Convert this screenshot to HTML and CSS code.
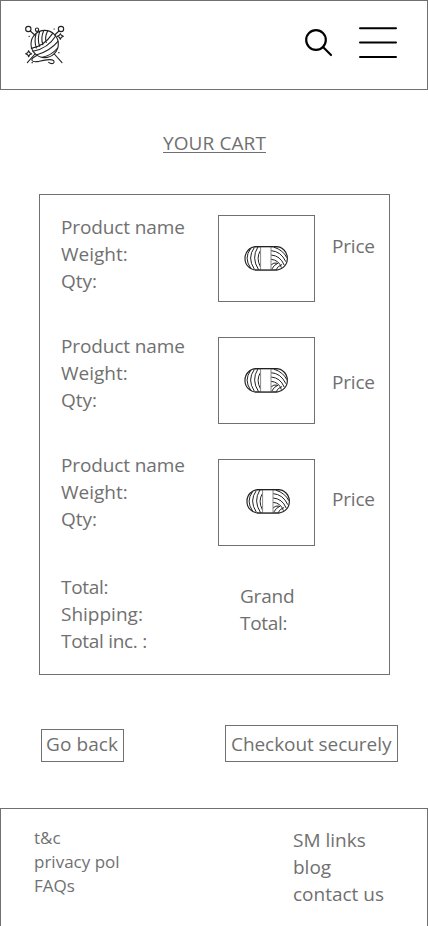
FILE: index.html
```html
<!DOCTYPE html>
<html lang="en">
<head>
<meta charset="utf-8">
<meta name="viewport" content="width=device-width, initial-scale=1">
<title>Your cart</title>
<link rel="stylesheet" href="styles.css">
</head>
<body>
<svg class="defs" aria-hidden="true">
  <symbol id="skein" viewBox="0 0 180 108">
    <path class="strand" d="M57 30Q36 59 57 92M68 28Q48 60 70 94M76 38Q62 60 76 86M46 33Q26 60 46 89"/>
    <path class="strand" d="M109 38Q138 40 152 70M109 51Q136 53 147 80M109 64Q132 66 139 88M118 28Q144 36 155 58M109 80Q116 73 125 75M111 92Q117 80 128 76M124 94Q128 84 140 80"/>
    <rect x="30" y="26" width="127" height="70" rx="34"/>
    <path class="band" d="M78 26H108V96H78Z"/>
    <path d="M61 26H126M61 96H126"/>
  </symbol>
</svg>
<header class="header">
  <svg class="logo" viewBox="0 0 180 180">
    <circle cx="92" cy="84" r="41"/>
    <circle cx="43" cy="39" r="8"/><circle cx="141" cy="39" r="8"/><circle cx="69" cy="41" r="5"/>
    <path d="M49 45L62 57M135 45L122 57M63 114L40 140M121 114L144 140"/>
    <path d="M66 54Q60 75 67 96M77 47Q69 70 77 91M89 44Q79 67 87 86M101 45Q91 64 97 79M52 97Q90 91 116 52M57 106Q102 97 125 60M67 117Q108 105 132 76M86 124Q112 118 131 96"/>
    <path d="M67 119C46 130 50 140 75 136C94 131 113 129 119 134C124 144 111 145 104 139"/>
    <path d="M139 53L142 58L148 61L142 64L139 70L136 64L130 61L136 58ZM44 104L47 110L53 113L47 116L44 122L41 116L35 113L41 110Z"/>
    <path d="M45 61H46M134 110H135M54 140H55M120 39H121"/>
  </svg>
  <svg class="search" viewBox="0 0 28 28"><circle cx="11" cy="11" r="9.8"/><path d="M18 18L26 26"/></svg>
  <svg class="menu" viewBox="0 0 38 33"><path d="M1 2.2H37M1 16.5H37M1 30.9H37"/></svg>
</header>
<main>
  <h1 class="title">YOUR CART</h1>
  <section class="cart">
    <div class="details">
      <p><span class="name">Product name</span><br>Weight:<br>Qty:</p>
      <p><span class="name">Product name</span><br>Weight:<br>Qty:</p>
      <p><span class="name">Product name</span><br>Weight:<br>Qty:</p>
      <p class="totals"><span class="tight">Total:</span><br>Shipping:<br><span class="tight">Total inc. :</span></p>
    </div>
    <div class="media">
      <div class="thumb"><svg class="yarn"><use href="#skein"/></svg></div>
      <div class="thumb"><svg class="yarn"><use href="#skein"/></svg></div>
      <div class="thumb thumb-last"><svg class="yarn"><use href="#skein"/></svg></div>
      <p class="grand">Grand<br><span class="tight">Total:</span></p>
    </div>
    <div class="prices"><p>Price</p><p>Price</p><p>Price</p></div>
  </section>
  <div class="actions">
    <button class="back">Go back</button>
    <button class="checkout">Checkout securely</button>
  </div>
</main>
<footer class="footer">
  <nav class="legal"><a>t&amp;c</a><a>privacy pol</a><a>FAQs</a></nav>
  <nav class="links"><a>SM links</a><a>blog</a><a>contact us</a></nav>
</footer>
</body>
</html>
```
FILE: styles.css
```css
* { box-sizing: border-box; }
body {
  margin: 0;
  height: 926px;
  overflow: hidden;
  background: #fff;
  color: #707070;
  font: 19px/27px "Open Sans", "Noto Sans", sans-serif;
}
p, h1 { margin: 0; }
svg { display: block; flex: none; fill: none; stroke-linecap: round; stroke-linejoin: round; }
.defs { width: 0; height: 0; position: absolute; }

.header { display: flex; align-items: flex-start; height: 90px; border: 1px solid #707070; }
.logo { width: 60px; height: 60px; margin: 15px 0 0 13px; stroke: #222; stroke-width: 3.3; }
.search { width: 28px; height: 28px; margin: 28px 0 0 231px; stroke: #000; stroke-width: 2.2; }
.menu { width: 38px; height: 33px; margin: 25px 0 0 26px; stroke: #000; stroke-width: 2; }

.title {
  width: 103px;
  margin: 40px 0 0 163px;
  font-size: 19px;
  font-weight: 400;
  white-space: nowrap;
  letter-spacing: 0.1px;
  text-decoration: underline;
  text-decoration-thickness: 1px;
  text-underline-offset: 2px;
}
.cart { display: flex; width: 351px; height: 481px; margin: 37px 0 0 39px; border: 1px solid #707070; }
.details { display: flex; flex-direction: column; gap: 38px; width: 157px; padding: 19px 0 0 21px; white-space: nowrap; }
.name { letter-spacing: -0.12px; }
.tight { letter-spacing: -0.3px; }
.totals { margin-top: 3px; }
.media { display: flex; flex-direction: column; gap: 35px; width: 97px; margin-left: 21px; padding-top: 20px; }
.thumb { height: 87px; border: 1px solid #707070; padding: 22px 0 0 16px; }
.thumb-last { padding: 21px 0 0 18px; }
.yarn { width: 60px; height: 36px; stroke: #222; stroke-width: 3.5; }
.strand { stroke-width: 3; }
.band { fill: #fff; stroke: #888; stroke-width: 3; }
.grand { margin: 2px 0 0 22px; letter-spacing: -0.2px; }
.prices { display: flex; flex-direction: column; padding-top: 38px; margin-left: 17px; letter-spacing: -0.2px; }
.prices p + p { margin-top: 109px; }
.prices p + p + p { margin-top: 90px; }

.actions { display: flex; align-items: flex-end; justify-content: space-between; height: 37px; margin: 50px 30px 0 41px; }
button { border: 1px solid #707070; border-radius: 0; background: #fff; color: inherit; font: inherit; white-space: nowrap; padding: 0 0 0 4px; text-align: left; }
.back { width: 83px; height: 33px; padding-bottom: 2px; letter-spacing: 0.1px; }
.checkout { width: 173px; height: 37px; padding: 2px 0 0 5px; letter-spacing: -0.06px; }

.footer { display: flex; justify-content: space-between; height: 119px; margin-top: 46px; padding: 17px 43px 0 33px; border: 1px solid #707070; }
.footer nav { display: flex; flex-direction: column; white-space: nowrap; }
.legal { font-size: 17px; line-height: 24px; }
.footer .links { width: 91px; padding-top: 1px; }
```
